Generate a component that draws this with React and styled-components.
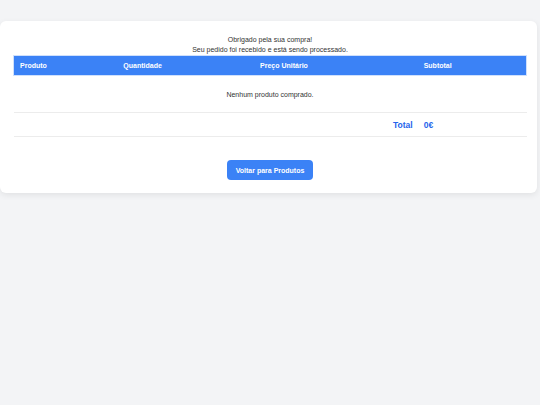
import React from "react";
import styled, { createGlobalStyle } from "styled-components";

const GlobalStyle = createGlobalStyle`
  html, body {
    margin: 0;
    padding: 0;
    background: #f3f4f6;
    font-family: "Liberation Sans", Arial, sans-serif;
  }
`;

const Page = styled.div`
  width: 540px;
  height: 405px;
  padding-top: 21px;
  box-sizing: border-box;
`;

const Card = styled.div`
  width: 537px;
  box-sizing: border-box;
  padding: 13px 10px 13px 13px;
  background: #fff;
  border-radius: 6px;
  box-shadow: 0 2px 6px rgba(0, 0, 0, 0.08);
  display: flex;
  flex-direction: column;
  align-items: stretch;
`;

const Message = styled.p`
  margin: 0;
  text-align: center;
  font-size: 7px;
  line-height: 10px;
  color: #333;
  &:first-child { margin-top: 1px; }
`;

const Table = styled.table`
  width: 514px;
  margin-top: 0;
  border-collapse: collapse;
  font-size: 7px;
  color: #333;
`;

const HeadCell = styled.th`
  width: ${(p) => p.w}px;
  height: 20px;
  padding: 0 6px;
  box-sizing: border-box;
  background: #3b82f6;
  color: #fff;
  font-weight: 700;
  text-align: left;
  border-top: 1px solid #cfe0fc;
  border-bottom: 1px solid #cfe0fc;
  &:first-child { border-left: 1px solid #cfe0fc; }
  &:last-child { border-right: 1px solid #cfe0fc; }
`;

const EmptyCell = styled.td`
  height: 37px;
  box-sizing: border-box;
  text-align: center;
  border-bottom: 1px solid #ececec;
  padding: 0;
`;

const TotalCell = styled.td`
  height: 24px;
  box-sizing: border-box;
  padding: 0 ${(p) => (p.right ? "5px" : "6px")};
  text-align: ${(p) => (p.right ? "right" : "left")};
  font-size: 8.5px;
  font-weight: 700;
  color: #2563eb;
  border-bottom: 1px solid #ececec;
`;

const Actions = styled.div`
  display: flex;
  justify-content: center;
  margin-top: 23px;
`;

const BackButton = styled.button`
  height: 20px;
  padding: 0 9px;
  border: none;
  border-radius: 4px;
  background: #3b82f6;
  color: #fff;
  font-family: "Liberation Sans", Arial, sans-serif;
  font-size: 7px;
  font-weight: 700;
  cursor: pointer;
`;

const columns = [
  { label: "Produto", w: 104 },
  { label: "Quantidade", w: 137 },
  { label: "Preço Unitário", w: 164 },
  { label: "Subtotal", w: 109 },
];

export default function App() {
  return (
    <>
      <GlobalStyle />
      <Page>
        <Card>
          <Message>Obrigado pela sua compra!</Message>
          <Message>Seu pedido foi recebido e está sendo processado.</Message>
          <Table>
            <thead>
              <tr>
                {columns.map((c) => (
                  <HeadCell key={c.label} w={c.w}>
                    {c.label}
                  </HeadCell>
                ))}
              </tr>
            </thead>
            <tbody>
              <tr>
                <EmptyCell colSpan={4}>Nenhum produto comprado.</EmptyCell>
              </tr>
              <tr>
                <TotalCell colSpan={3} right>
                  Total
                </TotalCell>
                <TotalCell>0€</TotalCell>
              </tr>
            </tbody>
          </Table>
          <Actions>
            <BackButton>Voltar para Produtos</BackButton>
          </Actions>
        </Card>
      </Page>
    </>
  );
}
